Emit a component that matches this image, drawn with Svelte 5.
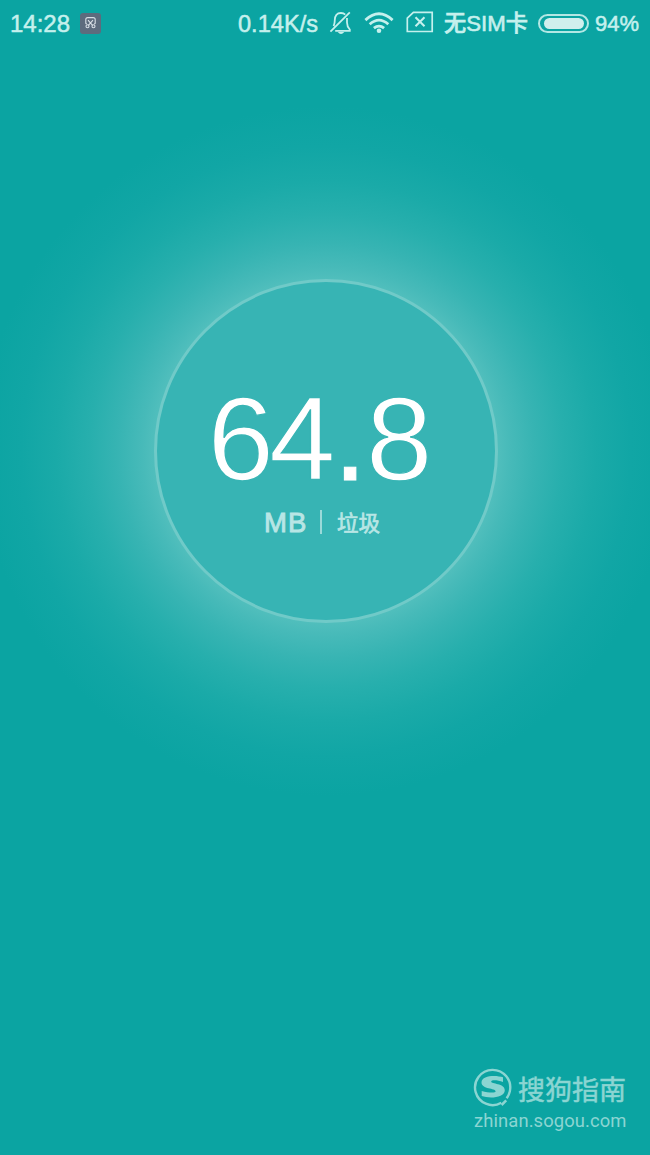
<script>
  const status = { time: '14:28', speed: '0.14K/s', carrier: '无SIM卡', battery: 94 };
  const junk = { whole: '64', fraction: '8', unit: 'MB', label: '垃圾' };
</script>

<main class="screen">
  <header class="status">
    <span class="time">{status.time}</span>
    <span class="app-badge">
      <svg width="14" height="14" viewBox="0 0 14 14" fill="none" stroke="#d9dfe6" stroke-width="1.1">
        <path d="M2.6 8.2 1.8 7.2V3.6Q1.8 1.6 3.8 1.6H9.2Q11.2 1.6 11.2 3.6V7.2L10.4 8.2M4 4.2 8.6 9.3M9 4.2 4.4 9.3" />
        <circle cx="3.5" cy="10.3" r="1.5" /><circle cx="9.5" cy="10.3" r="1.5" />
      </svg>
    </span>
    <span class="speed">{status.speed}</span>
    <svg class="bell" width="24" height="26" viewBox="0 0 24 26" fill="none" stroke="#c5f0ed" stroke-width="1.8">
      <path d="M4.6 16.2Q5.8 13.6 5.8 10.1C5.8 5.4 8 3 11.9 3Q14.7 3 16.2 4.6M18 8V12.5Q18 16.5 20.8 19.5V20.8H6.2M1.4 21.6 20.8 2.3" />
      <path d="M8.7 21.9Q12 26 15.3 21.9" fill="#c5f0ed" stroke="none" />
    </svg>
    <svg class="wifi" width="30" height="22" viewBox="0 0 30 22" fill="none" stroke="#c5f0ed" stroke-width="2.8">
      <path d="M1.4 8.1Q15-4.5 28.6 8.1M5.7 12.3Q15 3.9 24.3 12.3M9.9 16.2Q15 12 20.1 16.2" />
      <circle cx="15" cy="18.8" r="2.3" fill="#c5f0ed" stroke="none" />
    </svg>
    <svg class="sim" width="28" height="22" viewBox="0 0 28 22" fill="none" stroke="#c5f0ed" stroke-width="1.7">
      <path d="M7.4 1.3H26.2V20.5H1.3V7.2Z" /><path d="m9.5 6.2 9 9m0-9-9 9" stroke-width="2.1" />
    </svg>
    <span class="carrier">{status.carrier}</span>
    <span class="battery"><i></i></span>
    <span class="percent">{status.battery}%</span>
  </header>

  <section class="stage">
    <div class="disc">
      <svg class="size" width="240" height="96" viewBox="0 0 240 96">
        <text y="88"><tspan x="7.5 69">{junk.whole}</tspan><tspan class="point" x="133.5">.</tspan><tspan x="166">{junk.fraction}</tspan></text>
      </svg>
      <div class="caption"><span class="unit">{junk.unit}</span><i></i><span class="label">{junk.label}</span></div>
    </div>
  </section>

  <footer class="brand">
    <div class="brand-row">
      <svg width="40" height="40" viewBox="0 0 40 40" fill="none" stroke="#8bd5d2">
        <path d="M28.3 34.8A17.6 17.6 0 1 1 36.8 23.4Q35.8 27.4 33.6 30.3" stroke-width="2.4" />
        <path d="m28.6 37 4.6-4.6" stroke-width="2.5" />
        <path d="M30 9.3C23.7 6.9 8.5 7 8.5 14.4C8.5 21.4 22.6 19.8 22.6 23.2C22.6 25.4 15.6 24.8 8.7 23V28.1C16.4 30.9 31.8 30 31.8 22.3C31.8 15 18.2 16.5 18.2 13.6C18.2 11.4 24.8 12 30 13.9Z" fill="#8bd5d2" stroke="none" />
      </svg>
      <span>搜狗指南</span>
    </div>
    <div class="url">zhinan.sogou.com</div>
  </footer>
</main>

<style>
  :global(body) { margin: 0; background: #0ba4a2; }
  .screen {
    box-sizing: border-box;
    width: 650px;
    height: 1155px;
    overflow: hidden;
    display: flex;
    flex-direction: column;
    color: #c5f0ed;
    font-family: "Liberation Sans", "Noto Sans CJK SC", sans-serif;
    background: radial-gradient(circle at 326px 451px, #52bfbd 0, #52bfbd 170px, #47bab9 184px, #37b4b3 208px, #27afad 237px, #1aaaa8 270px, #11a6a5 305px, #0ba4a2 345px);
  }
  .status { height: 46px; display: flex; align-items: center; white-space: nowrap; flex: none; }
  .status > * { flex: none; }
  .time, .speed, .percent, .carrier { line-height: 28px; -webkit-text-stroke: 0.5px currentColor; padding-top: 1px; }
  .time { width: 60px; margin-left: 10px; font-size: 24px; }
  .app-badge { width: 21px; height: 21px; margin-left: 10px; border-radius: 3px; background: #5d6b7d; display: grid; place-items: center; }
  .speed { width: 80px; margin-left: 137px; font-size: 23.6px; }
  .bell { margin-left: 11px; margin-top: -1px; }
  .wifi { margin-left: 11px; margin-top: -1px; }
  .sim { margin-left: 12px; margin-top: -2px; }
  .carrier { width: 84px; margin-left: 10px; font-size: 22.2px; font-weight: 500; -webkit-text-stroke-width: 0.6px; }
  .battery { box-sizing: border-box; width: 51px; height: 19px; margin-left: 10px; padding: 2px 3px 2px 4px; border: 2px solid #b3e7e4; border-radius: 10px; display: flex; }
  .battery i { flex: 1; background: #d0efed; border-radius: 6px; }
  .percent { margin-left: 6px; font-size: 22px; }
  .stage { margin-top: 233px; display: flex; justify-content: center; padding-left: 2px; }
  .disc {
    box-sizing: border-box;
    width: 344px;
    height: 344px;
    border: 3px solid #70cac8;
    border-radius: 50%;
    background: #37b4b4;
    display: flex;
    flex-direction: column;
    align-items: center;
    padding-top: 110px;
  }
  .size { margin-right: 12px; display: block; overflow: visible; }
  .size text { font-size: 119.5px; fill: #fff; stroke: #37b4b4; stroke-width: 1.3px; }
  .size .point { stroke: #fff; stroke-width: 1px; }
  .caption { width: 116px; height: 30px; margin: 20px 8px 0 0; display: flex; align-items: center; color: #b8e6e5; }
  .unit { font-size: 27.5px; width: 44px; letter-spacing: 1px; -webkit-text-stroke: 0.9px currentColor; }
  .caption i { width: 2px; height: 24px; margin: -3px 15px 0 12px; background: #9bdad9; }
  .label { font-size: 21.5px; margin-top: -4px; white-space: nowrap; -webkit-text-stroke: 0.7px currentColor; }
  .brand { margin: auto 22px 22px auto; width: 155px; color: #8bd5d2; }
  .brand-row { display: flex; align-items: center; height: 40px; gap: 5px; font-size: 27px; white-space: nowrap; }
  .brand-row svg { flex: none; }
  .brand-row span { -webkit-text-stroke: 0.5px currentColor; }
  .url { margin-top: 1px; font: 18.4px/24px Roboto, sans-serif; letter-spacing: 0.1px; padding-left: 1px; white-space: nowrap; }
</style>
